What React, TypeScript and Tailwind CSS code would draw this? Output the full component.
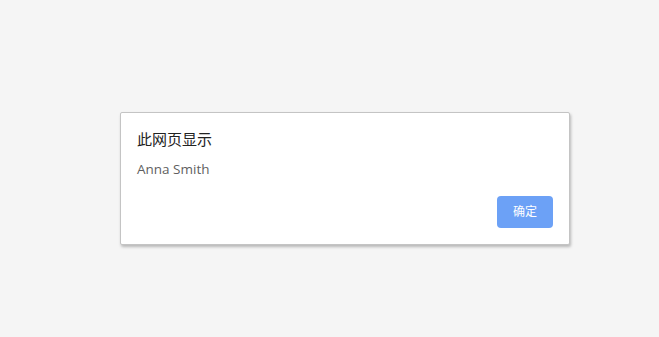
import React from "react";

export default function App() {
  return (
    <div className="min-h-[337px] w-full bg-[#f5f5f5] pt-[112px] pl-[120px] font-['Open_Sans','Noto_Sans_CJK_SC',sans-serif]">
      {/* ── Alert dialog ── */}
      <div className="w-[450px] rounded-[2px] border border-[#c4c4c4] bg-white pt-4 pr-4 pb-4 pl-4 shadow-[1px_2px_3px_rgba(0,0,0,0.25)]">
        <div className="text-[15px] leading-5 text-[#222]">此网页显示</div>
        <div className="mt-[11px] text-[13.5px] leading-[18px] text-[#5f5f5f]">Anna Smith</div>
        <div className="mt-[18px] flex justify-end">
          <button className="flex h-8 w-14 items-center justify-center rounded-[4px] bg-[#6ca1f6] text-[12px] text-white">
            确定
          </button>
        </div>
      </div>
    </div>
  );
}
